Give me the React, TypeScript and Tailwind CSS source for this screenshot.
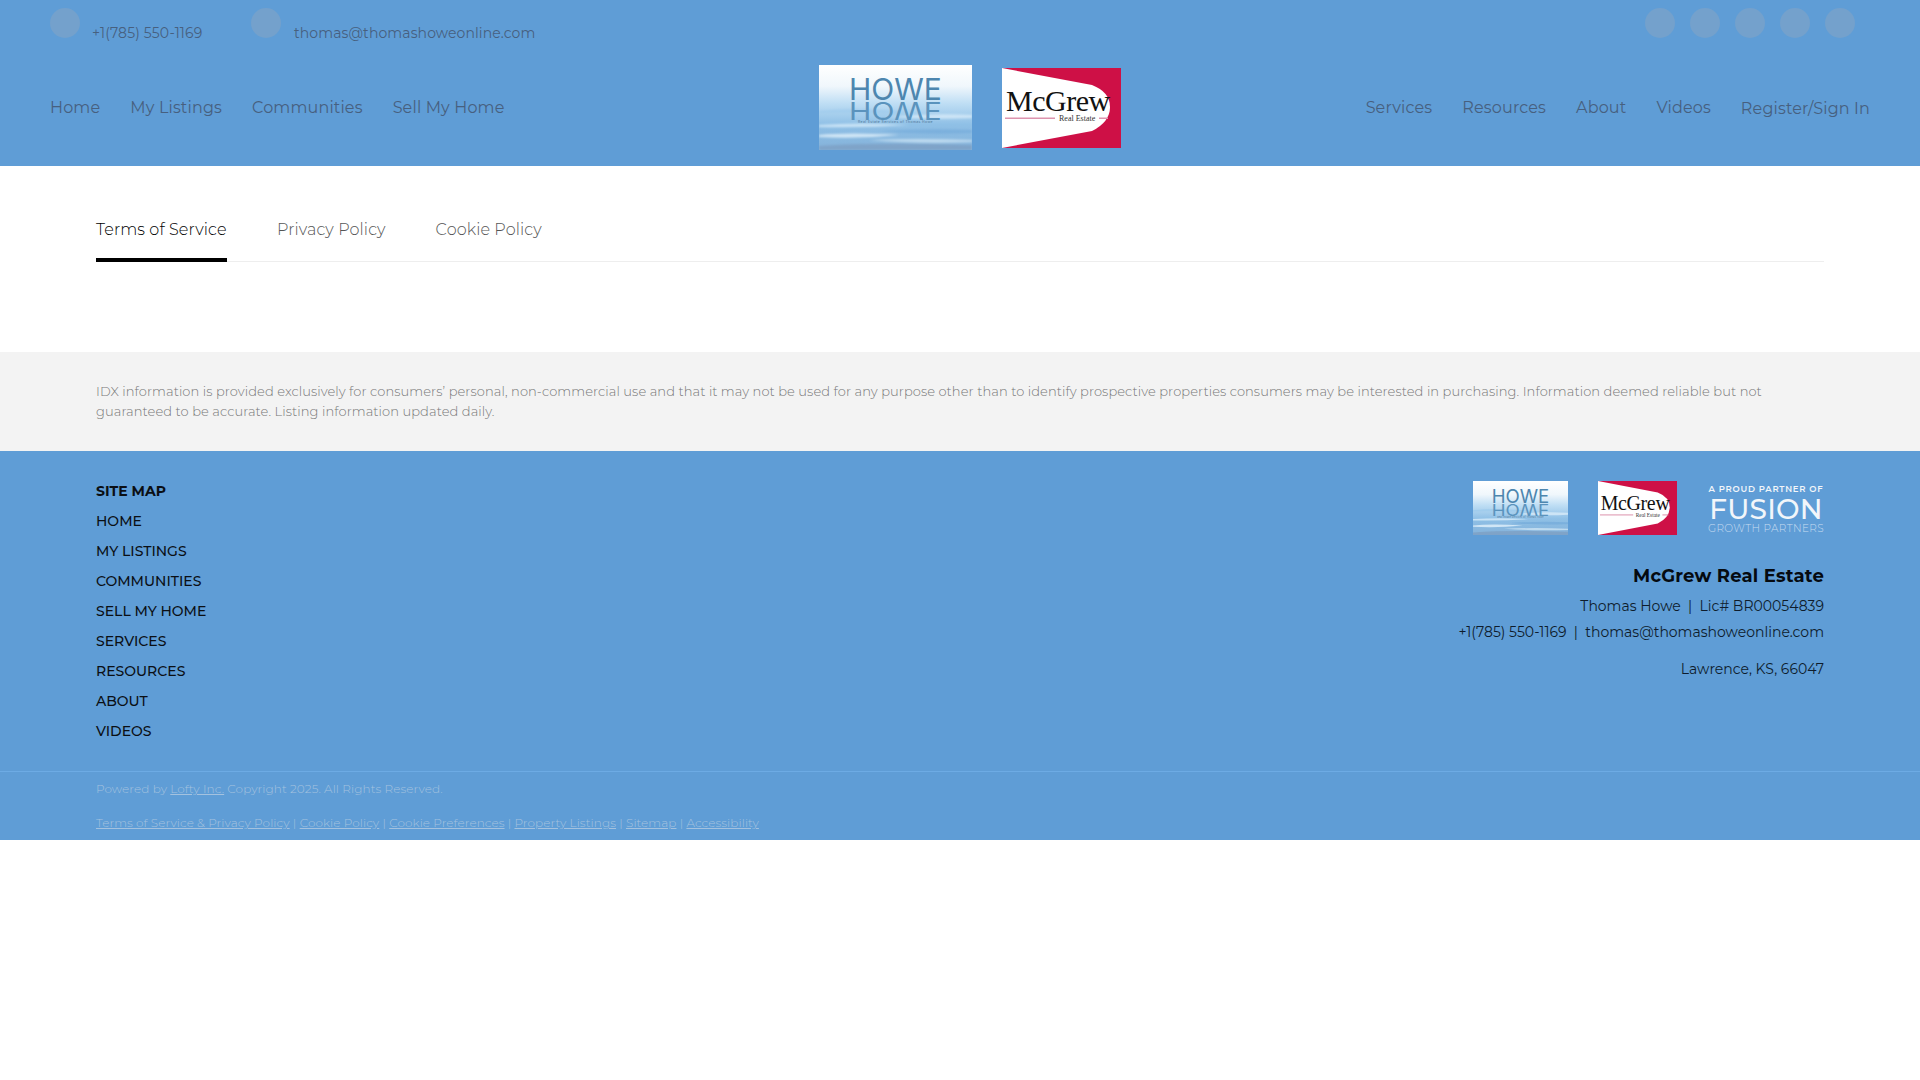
const font = "font-['Montserrat','Inter','Liberation_Sans',sans-serif]";

const leftNav = ["Home", "My Listings", "Communities", "Sell My Home"];
const rightNav = ["Services", "Resources", "About", "Videos"];
const siteMap = ["HOME", "MY LISTINGS", "COMMUNITIES", "SELL MY HOME", "SERVICES", "RESOURCES", "ABOUT", "VIDEOS"];
const legalLinks = ["Terms of Service & Privacy Policy", "Cookie Policy", "Cookie Preferences", "Property Listings", "Sitemap", "Accessibility"];

function HoweLogo({ className, id }: { className: string; id: string }) {
  return (
    <svg className={className} viewBox="0 0 153 85" preserveAspectRatio="none">
      <defs>
        <linearGradient id={id} x1="0" y1="0" x2="0" y2="1">
          <stop offset="0" stopColor="#ffffff" />
          <stop offset="0.25" stopColor="#f0f7fc" />
          <stop offset="0.45" stopColor="#bfdef4" />
          <stop offset="0.7" stopColor="#8fc0e6" />
          <stop offset="1" stopColor="#84b2da" />
        </linearGradient>
        <filter id={`${id}-blur`}>
          <feGaussianBlur stdDeviation="0.8" />
        </filter>
      </defs>
      <rect width="153" height="85" fill={`url(#${id})`} />
      <g filter={`url(#${id}-blur)`}>
        <path d="M0 46q30-3 60-1t40 1q-30 3-55 2t-45 0z" fill="#9ccbec" opacity="0.7" />
        <path d="M70 52q40-4 83-2v3q-40 2-83-1z" fill="#e0f0fb" opacity="0.7" />
        <path d="M0 60q40-3 90 0q-45 3-90 2z" fill="#d7ecfa" opacity="0.8" />
        <path d="M60 66q50-3 93-1v3q-50 2-93-2z" fill="#6fa9d8" opacity="0.6" />
        <path d="M0 70q30-3 80 0q-40 4-80 2z" fill="#e2f1fb" opacity="0.8" />
        <path d="M50 75q50-2 103 0v2q-55 2-103-2z" fill="#d5e9f7" opacity="0.7" />
        <path d="M0 81q60-4 153-1v5H0z" fill="#7c9cc0" opacity="0.7" />
      </g>
      <text x="76.5" y="35" textAnchor="middle" fontFamily="Inter, sans-serif" fontSize="30" fill="#4d86af">HOWE</text>
      <text x="76.5" y="-45" textAnchor="middle" fontFamily="Inter, sans-serif" fontSize="30" fill="#5a93bd" transform="scale(1 -0.82)">HOWE</text>
      <text x="76.5" y="58" textAnchor="middle" fontFamily="Inter, sans-serif" fontSize="3.4" letterSpacing="0.4" fill="#4f7696">Real Estate Services of Thomas Howe</text>
    </svg>
  );
}

function McGrewLogo({ className }: { className: string }) {
  return (
    <svg className={className} viewBox="0 0 119 80" preserveAspectRatio="none">
      <rect width="119" height="80" fill="#ce1046" />
      <path d="M0 0 90 17Q108 24 108 39T90 63L0 80Z" fill="#ffffff" />
      <text x="4" y="43" fontFamily="Liberation Serif, serif" fontSize="30" letterSpacing="-0.5" fill="#111111">McGrew</text>
      <rect x="3" y="49.5" width="50" height="1.5" fill="#dd94ae" />
      <rect x="97" y="49.5" width="9" height="1.5" fill="#dd94ae" />
      <text x="57" y="53" fontFamily="Liberation Serif, serif" fontSize="8" fill="#333333">Real Estate</text>
    </svg>
  );
}

function FusionLogo() {
  return (
    <div className="w-[116px] h-[54px] pt-[4px] flex flex-col items-center text-[#f2f6fa]">
      <span className="text-[8.5px] leading-[8px] font-semibold tracking-[0.75px] whitespace-nowrap">A PROUD PARTNER OF</span>
      <span className="mt-[4px] text-[28px] leading-[24px] font-medium tracking-[0.2px] whitespace-nowrap">FUSION</span>
      <span className="mt-[3px] text-[10.5px] leading-[10px] font-light text-[#c6dcf0] tracking-[0.4px] whitespace-nowrap">GROWTH PARTNERS</span>
    </div>
  );
}

function Dot() {
  return <span className="block w-[30px] h-[30px] rounded-full bg-[#74a1cc]" />;
}

export default function App() {
  return (
    <div className={`${font} min-h-[1080px] bg-white`}>
      <header className="h-[166px] bg-[#5f9dd6] text-[#47607f] flex flex-col">
        <div className="h-[65px] pl-[50px] pr-[65px] pt-[8px] flex justify-between items-start">
          <div className="flex">
            <Dot />
            <span className="ml-[12px] mt-[16px] w-[110px] text-[14px] leading-[18px] tracking-[0.15px] whitespace-nowrap">+1(785) 550-1169</span>
            <span className="ml-[49px]"><Dot /></span>
            <span className="ml-[13px] mt-[16px] text-[14px] leading-[18px] tracking-[0.1px] whitespace-nowrap">thomas@thomashoweonline.com</span>
          </div>
          <div className="flex gap-[15px]">
            <Dot /><Dot /><Dot /><Dot /><Dot />
          </div>
        </div>
        <div className="h-[85px] px-[50px] flex items-center">
          <nav className="w-[453px] flex gap-[30px] text-[16px] leading-[20px] tracking-[0.15px]">
            {leftNav.map((n) => (
              <span key={n} className="whitespace-nowrap">{n}</span>
            ))}
          </nav>
          <div className="ml-[316px] flex items-center gap-[30px]">
            <HoweLogo className="w-[153px] h-[85px]" id="howeTop" />
            <McGrewLogo className="w-[119px] h-[80px]" />
          </div>
          <nav className="ml-auto flex items-center gap-[30px] text-[16px] leading-[20px] tracking-[0.15px]">
            {rightNav.map((n) => (
              <span key={n} className="whitespace-nowrap">{n}</span>
            ))}
            <span className="mt-[2px] whitespace-nowrap">Register/Sign In</span>
          </nav>
        </div>
      </header>

      <main className="h-[186px] px-[96px] pt-[46px]">
        <div className="flex gap-[50px] border-b border-[#eeeeee] h-[50px] text-[16px] leading-[36px] font-light tracking-[0.12px] text-[#555555]">
          <span className="w-[131px] h-[50px] border-b-4 border-black text-black whitespace-nowrap">Terms of Service</span>
          <span className="whitespace-nowrap">Privacy Policy</span>
          <span className="whitespace-nowrap">Cookie Policy</span>
        </div>
      </main>

      <section className="h-[99px] bg-[#f3f3f3] px-[96px] pt-[29px] text-[13px] leading-[20px] font-light tracking-[0.085px] text-[#777777]">
        IDX information is provided exclusively for consumers’ personal, non-commercial use and that it may not be used for any purpose other than to identify prospective properties consumers may be interested in purchasing. Information deemed reliable but not guaranteed to be accurate. Listing information updated daily.
      </section>

      <footer className="h-[389px] bg-[#5f9dd6] flex flex-col">
        <div className="h-[321px] px-[96px] pt-[25px] flex justify-between border-b border-[#6dabe4]">
          <div className="flex flex-col text-[14px] leading-[30px] text-[#0b0f14]">
            <span className="font-bold">SITE MAP</span>
            {siteMap.map((s) => <span key={s} className="font-medium">{s}</span>)}
          </div>
          <div className="flex flex-col items-end pt-[5px] text-[#0e1c2c] text-[14px]">
            <div className="flex items-center h-[54px]">
              <HoweLogo className="w-[95px] h-[54px]" id="howeFooter" />
              <McGrewLogo className="ml-[30px] w-[79px] h-[54px]" />
              <div className="ml-[31px]"><FusionLogo /></div>
            </div>
            <span className="mt-[30px] text-[18px] leading-[22px] font-bold tracking-[0.2px] text-[#050a10]">McGrew Real Estate</span>
            <span className="mt-[8px] leading-[22px]">Thomas Howe&nbsp; |&nbsp; Lic# BR00054839</span>
            <span className="mt-[4px] leading-[22px]">+1(785) 550-1169&nbsp; |&nbsp; thomas@thomashoweonline.com</span>
            <span className="mt-[15px] leading-[22px]">Lawrence, KS, 66047</span>
          </div>
        </div>
        <div className="px-[96px] text-[12px] font-light tracking-[0.09px] text-[#a4c2df]">
          <p className="mt-[9px] leading-[16px]">Powered by <span className="underline">Lofty Inc.</span> Copyright 2025. All Rights Reserved.</p>
          <p className="mt-[18px] leading-[16px]">
            {legalLinks.map((l, i) => (
              <span key={l}>
                {i > 0 && " | "}
                <span className="underline">{l}</span>
              </span>
            ))}
          </p>
        </div>
      </footer>
    </div>
  );
}
